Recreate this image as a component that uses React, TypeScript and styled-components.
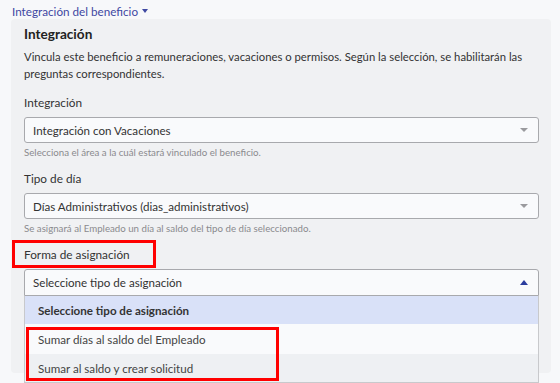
import * as React from 'react'
import styled, { createGlobalStyle } from 'styled-components'

const GlobalStyle = createGlobalStyle`
  html, body {
    margin: 0;
    background: #f7f8fa;
    font-family: Lato, "Open Sans", sans-serif;
    color: #333;
  }
`

const Page = styled.div`
  padding: 2px 9px 0 11px;
  height: 383px;
  box-sizing: border-box;
  overflow: hidden;
`

const Toggle = styled.div`
  display: flex;
  align-items: center;
  gap: 4px;
  height: 17px;
  color: #3f48a2;
  font-size: 11.7px;
  padding-left: 1px;
`

const TinyCaret = styled.span`
  width: 0;
  height: 0;
  border-left: 3.5px solid transparent;
  border-right: 3.5px solid transparent;
  border-top: 4px solid #3f48a2;
`

const Panel = styled.section`
  background: #f0f1f3;
  border-radius: 4px;
  padding: 5px 12px 66px 13px;
`

const Title = styled.h2`
  margin: 0;
  font-size: 13.6px;
  font-weight: 700;
  line-height: 20px;
  color: #222;
`

const Description = styled.p`
  margin: 4px 0 12px;
  font-size: 11.3px;
  line-height: 17px;
`

const Field = styled.div`
  margin-bottom: 11px;
`

const Label = styled.div<{ $marked?: boolean }>`
  position: relative;
  width: fit-content;
  font-size: 11.8px;
  line-height: 18px;
  margin-bottom: 5px;

  ${(p) =>
    p.$marked &&
    `
    &::after {
      content: '';
      position: absolute;
      left: -12px;
      right: -26px;
      top: -6px;
      bottom: -4px;
      border: 3px solid #ff0000;
    }
  `}
`

const SelectWrap = styled.div`
  position: relative;
`

const SelectBox = styled.div<{ $open?: boolean }>`
  display: flex;
  align-items: center;
  justify-content: space-between;
  height: ${(p) => (p.$open ? '27px' : '26px')};
  box-sizing: border-box;
  padding: 0 10px 0 8px;
  background: #f9fafc;
  border: 1px solid #a8a9ad;
  border-radius: ${(p) => (p.$open ? '3px 3px 0 0' : '3px')};
  font-size: 11.6px;
  color: #333;
`

const Caret = styled.span<{ $up?: boolean }>`
  width: 0;
  height: 0;
  border-left: 4.5px solid transparent;
  border-right: 4.5px solid transparent;
  ${(p) =>
    p.$up
      ? 'border-bottom: 5px solid #2b3c9e;'
      : 'border-top: 4px solid #9a9a9e;'}
`

const Help = styled.div`
  margin-top: 2px;
  font-size: 9.7px;
  line-height: 14px;
  color: #8a8a8e;
`

const Menu = styled.ul`
  position: absolute;
  left: 0;
  right: 0;
  top: 27px;
  margin: 0;
  padding: 0;
  list-style: none;
  border: 1px solid #c8c9cc;
  border-top: none;
  z-index: 2;
`

const Option = styled.li<{ $tone: 'active' | 'plain' | 'hover' }>`
  display: flex;
  align-items: center;
  height: ${(p) => (p.$tone === 'plain' ? '30px' : '28px')};
  padding-left: 13px;
  font-size: 11.6px;
  font-weight: ${(p) => (p.$tone === 'active' ? 700 : 400)};
  color: ${(p) => (p.$tone === 'active' ? '#333' : '#444')};
  background: ${(p) =>
    p.$tone === 'active' ? '#d9e1f8' : p.$tone === 'hover' ? '#eef0f3' : '#f9fafc'};
`

const Marked = styled.div`
  position: relative;

  &::after {
    content: '';
    position: absolute;
    left: 1px;
    top: 3px;
    width: 253px;
    bottom: 1px;
    border: 3px solid #ff0000;
    box-sizing: border-box;
  }
`

export default function App() {
  return (
    <>
      <GlobalStyle />
      <Page>
        <Toggle>
          Integración del beneficio
          <TinyCaret />
        </Toggle>
        <Panel>
          <Title>Integración</Title>
          <Description>
            Vincula este beneficio a remuneraciones, vacaciones o permisos. Según la selección, se
            habilitarán las preguntas correspondientes.
          </Description>

          <Field>
            <Label>Integración</Label>
            <SelectBox>
              Integración con Vacaciones
              <Caret />
            </SelectBox>
            <Help>Selecciona el área a la cuál estará vinculado el beneficio.</Help>
          </Field>

          <Field>
            <Label>Tipo de día</Label>
            <SelectBox>
              Días Administrativos (dias_administrativos)
              <Caret />
            </SelectBox>
            <Help>Se asignará al Empleado un día al saldo del tipo de día seleccionado.</Help>
          </Field>

          <Field>
            <Label $marked>Forma de asignación</Label>
            <SelectWrap>
              <SelectBox $open>
                Seleccione tipo de asignación
                <Caret $up />
              </SelectBox>
              <Menu>
                <Option $tone="active">Seleccione tipo de asignación</Option>
                <Marked>
                  <Option $tone="plain">Sumar días al saldo del Empleado</Option>
                  <Option $tone="hover">Sumar al saldo y crear solicitud</Option>
                </Marked>
              </Menu>
            </SelectWrap>
          </Field>
        </Panel>
      </Page>
    </>
  )
}
